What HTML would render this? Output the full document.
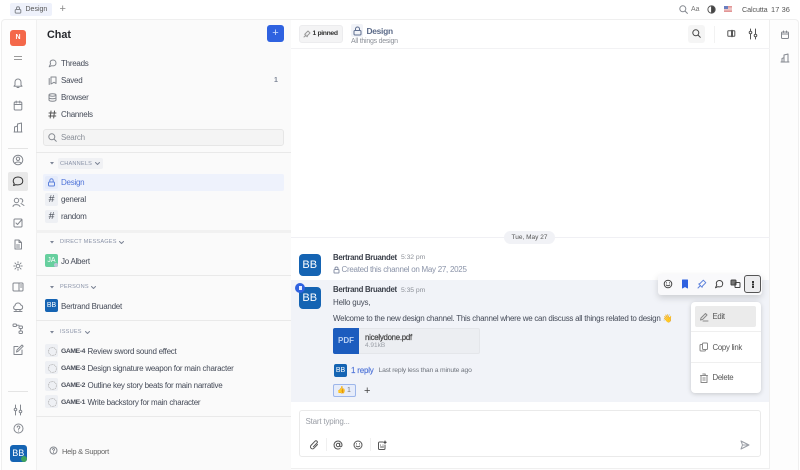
<!DOCTYPE html>
<html><head><meta charset="utf-8"><style>
html,body{margin:0;padding:0}
body{width:800px;height:470px;overflow:hidden;background:#fff;position:relative;font-family:"Liberation Sans",sans-serif;color:#454b58}
.a{position:absolute}
.t{position:absolute;white-space:nowrap;line-height:12px;font-size:8px;letter-spacing:-.26px}
svg{position:absolute;fill:none;stroke:#84888f;stroke-width:1;stroke-linecap:round;stroke-linejoin:round}
.hash{position:absolute;left:45px;width:13px;height:13px;background:#eef0f4;border-radius:2px;text-align:center;line-height:13px;font-size:10.5px;color:#4a4f5a}
.sec{position:absolute;left:60px;font-size:5.6px;letter-spacing:.2px;color:#8a93a8;line-height:10px;white-space:nowrap}
.line{position:absolute;left:36px;width:255px;background:#efefef}
.bb{position:absolute;background:#1564b3;color:#fff;text-align:center}
.g{font-size:6.8px;font-weight:700;letter-spacing:-.4px;color:#4a4f5a;left:61px}
.d{left:87.5px}
.nm{left:333px;font-weight:700;font-size:7.8px;letter-spacing:-.3px;color:#3a3f49}
.tm{left:401px;font-size:6.8px;color:#8d9199;letter-spacing:-.05px}
.m{left:712.5px;font-size:7.8px;color:#555;letter-spacing:-.28px}
.ic{position:absolute;left:45px;width:13px;height:13px;background:#eef0f4;border-radius:2px}
.ci{position:absolute;left:48px;width:7px;height:7px;border:1px dotted #aaa;border-radius:50%;box-sizing:content-box}
</style></head><body>
<!-- top bar -->
<div class="a" style="left:10px;top:3px;width:42px;height:13px;background:#eef1fb;border-radius:2px"></div>
<svg style="left:14px;top:6px" width="8" height="8" viewBox="0 0 8 8"><rect x="1.2" y="3.5" width="5.6" height="3.6" rx="1"/><path d="M2.5 3.5V2.200a1.500 1.500 0 0 1 3 0v1.300"/></svg>
<div class="t" style="left:25.500px;top:4px;font-size:7px;color:#555;letter-spacing:0">Design</div>
<div class="t" style="left:59.500px;top:3px;font-size:11px;color:#888;letter-spacing:0">+</div>
<svg style="left:679px;top:5px" width="9" height="9" viewBox="0 0 9 9"><circle cx="3.800" cy="3.800" r="3"/><path d="M6 6l2.400 2.400"/></svg>
<div class="t" style="left:691px;top:4px;font-size:7px;color:#777;letter-spacing:0">Aa</div>
<svg style="left:707px;top:5px;stroke:#555" width="9" height="9" viewBox="0 0 9 9"><circle cx="4.500" cy="4.500" r="3.600"/><path d="M4.500 .9a3.600 3.600 0 0 1 0 7.200z" fill="#444"/></svg>
<div class="a" style="left:724px;top:6px;width:8px;height:6px;background:linear-gradient(#e08a8a,#f0d0d0 50%,#e08a8a)"></div>
<div class="a" style="left:724px;top:6px;width:4px;height:3px;background:#6a7fc0"></div>
<div class="t" style="left:742px;top:4px;font-size:7.200px;color:#555;letter-spacing:-.1px">Calcutta</div>
<div class="t" style="left:771px;top:4px;font-size:7.400px;color:#555;letter-spacing:.1px">17 36</div>

<!-- frame -->
<div class="a" style="left:1px;top:19px;width:798px;height:451px;background:#fdfdfd;border:1px solid #efefef;border-bottom:0;box-sizing:border-box;border-radius:4px 4px 0 0"></div>
<div class="a" style="left:36px;top:20px;width:255px;height:450px;background:#fafafa;border-left:1px solid #f0f0f0;box-sizing:border-box"></div>
<div class="a" style="left:291px;top:20px;width:479px;height:449px;background:#fff;border-right:1px solid #efefef;border-bottom:1px solid #efefef;box-sizing:border-box"></div>

<!-- left rail -->
<div class="a" style="left:10px;top:30px;width:16px;height:16px;background:#f4684a;border-radius:3px;color:#fff;font-size:7px;text-align:center;line-height:16px;font-weight:700">N</div>
<div class="a" style="left:14px;top:56px;width:8px;height:1px;background:#9a9a9a"></div>
<div class="a" style="left:14px;top:59px;width:8px;height:1px;background:#9a9a9a"></div>
<svg style="left:13px;top:78px" width="10" height="11" viewBox="0 0 10 11"><path d="M5 1a3 3 0 0 0-3 3v3L1 8.200h8L8 7V4a3 3 0 0 0-3-3zM4 9.500h2"/></svg>
<svg style="left:13px;top:100px" width="10" height="11" viewBox="0 0 10 11"><rect x="1.200" y="2" width="7.600" height="8" rx="1"/><path d="M1.200 4.500h7.600M3.200 1v2M6.800 1v2"/></svg>
<svg style="left:13px;top:122px" width="10" height="11" viewBox="0 0 10 11"><path d="M1.500 10V5l3-1M4.500 10V2l4-1v9zM1 10h8"/></svg>
<div class="a" style="left:8px;top:148px;width:20px;height:1px;background:#e4e4e4"></div>
<svg style="left:12px;top:154px" width="12" height="12" viewBox="0 0 12 12"><circle cx="6" cy="6" r="4.800"/><circle cx="6" cy="4.800" r="1.700"/><path d="M2.800 9.500c1-2 5.400-2 6.400 0"/></svg>
<div class="a" style="left:8px;top:172px;width:20px;height:19px;background:#e9e9e9;border-radius:2px"></div>
<svg style="left:12px;top:176px;stroke:#333" width="12" height="11" viewBox="0 0 12 11"><path d="M6 1C3 1 1.200 2.700 1.200 5c0 1 .4 1.800 1 2.400L1.600 9.500l2.300-.9c.6.200 1.300.3 2.100.3 3 0 4.800-1.700 4.800-3.900S9 1 6 1z"/></svg>
<svg style="left:12px;top:197px" width="13" height="11" viewBox="0 0 13 11"><circle cx="4.500" cy="3.500" r="2.200"/><path d="M1 9.500c.4-2.500 5.600-2.500 7 0M8 1.800a2 2 0 0 1 2 3.400M9 6.500l3 2"/></svg>
<svg style="left:13px;top:218px" width="10" height="10" viewBox="0 0 10 10"><rect x="1" y="1" width="8" height="8" rx="1"/><path d="M3 5l1.500 1.500L8.500 2"/></svg>
<svg style="left:13px;top:239px" width="10" height="11" viewBox="0 0 10 11"><path d="M2 1h4l2.500 2.500V10H2zM6 1v2.500h2.500M3.500 6h3M3.500 8h3"/></svg>
<svg style="left:13px;top:261px" width="10" height="10" viewBox="0 0 10 10"><circle cx="5" cy="5" r="1.800"/><path d="M5 .8v1M5 8.200v1M.8 5h1M8.200 5h1M2 2l.7.7M7.300 7.300l.7.700M2 8l.7-.7M7.300 2.700L8 2"/></svg>
<svg style="left:12px;top:282px" width="12" height="10" viewBox="0 0 12 10"><rect x="1" y="1" width="10" height="8" rx="1"/><path d="M7 1v8M8.500 3h1.200M8.500 5h1.200"/></svg>
<svg style="left:12px;top:302px" width="12" height="12" viewBox="0 0 12 12"><path d="M3 7.500a2 2 0 0 1 0-3.800A3 3 0 0 1 8.800 3a2.300 2.300 0 0 1 0 4.500zM2 9.500h8M4 7.500v2M8 7.500v2"/></svg>
<svg style="left:12px;top:323px" width="12" height="12" viewBox="0 0 12 12"><rect x="1" y="1" width="3.500" height="2.500" rx="1"/><rect x="7" y="3" width="3.500" height="2.500" rx="1"/><rect x="7" y="8" width="3.500" height="2.500" rx="1"/><path d="M4.500 2.200H7M8.700 5.500V8"/></svg>
<svg style="left:12px;top:344px" width="12" height="12" viewBox="0 0 12 12"><path d="M6 2.500H2v8h8V6M4.500 8l.5-2L10 1l1.200 1.200-5 5z"/></svg>
<div class="a" style="left:8px;top:391px;width:20px;height:1px;background:#e4e4e4"></div>
<svg style="left:13px;top:404px" width="10" height="12" viewBox="0 0 10 12"><path d="M2.500 1v3M2.500 7v4M7.500 1v5M7.500 9v2"/><circle cx="2.500" cy="5.500" r="1.300"/><circle cx="7.500" cy="7.500" r="1.300"/></svg>
<svg style="left:13px;top:423px" width="11" height="11" viewBox="0 0 11 11"><circle cx="5.500" cy="5.500" r="4.500"/><path d="M4.200 4.200a1.300 1.300 0 1 1 1.900 1.200c-.4.200-.6.500-.6 1M5.500 8v.1"/></svg>
<div class="bb" style="left:10px;top:445px;width:16.500px;height:16.500px;border-radius:3px;font-size:9px;line-height:17px">BB</div>
<div class="a" style="left:21px;top:456px;width:6px;height:6px;background:#3fa35c;border-radius:50%"></div>

<!-- sidebar -->
<div class="t" style="left:47px;top:28px;font-size:10.800px;line-height:14px;font-weight:700;color:#26282d;letter-spacing:0">Chat</div>
<div class="a" style="left:267px;top:25px;width:17px;height:17px;background:#2f62e0;border-radius:3px;color:#cfe0ff;text-align:center;font-size:11px;line-height:16px">+</div>
<svg style="left:48px;top:59px" width="9" height="9" viewBox="0 0 9 9"><path d="M5 1C3.300 1 2.200 2 2.200 3.400c0 .5.100.9.400 1.300L1.200 7.800l2.500-1.100c.4.100.8.200 1.300.2C6.700 6.900 8 5.800 8 4S6.700 1 5 1z"/></svg>
<div class="t" style="left:61px;top:58px">Threads</div>
<svg style="left:48px;top:76px" width="9" height="9" viewBox="0 0 9 9"><path d="M3 1h5v6.500L6 6.300 3 8zM1.200 2.500v6"/></svg>
<div class="t" style="left:61px;top:75px">Saved</div>
<div class="t" style="left:274px;top:75px;font-size:7px;color:#7d8596;font-weight:700">1</div>
<svg style="left:48px;top:93px" width="9" height="9" viewBox="0 0 9 9"><ellipse cx="4.500" cy="2" rx="3.500" ry="1.200"/><path d="M1 2v5c0 .7 1.500 1.200 3.500 1.200S8 7.700 8 7V2M1 4.500c0 .7 1.500 1.200 3.500 1.200S8 5.200 8 4.500"/></svg>
<div class="t" style="left:61px;top:92px">Browser</div>
<svg style="left:48px;top:110px;stroke:#555" width="9" height="9" viewBox="0 0 9 9"><path d="M3 1L2.200 8M6.500 1l-.8 7M1 3h7M.8 6h7"/></svg>
<div class="t" style="left:61px;top:109px">Channels</div>
<div class="a" style="left:43px;top:129px;width:241px;height:17px;background:#f4f4f4;border:1px solid #e6e6e6;box-sizing:border-box;border-radius:3px"></div>
<svg style="left:47.500px;top:133px" width="9" height="9" viewBox="0 0 9 9"><circle cx="3.800" cy="3.800" r="3"/><path d="M6 6l2.300 2.300"/></svg>
<div class="t" style="left:61px;top:132px;color:#8a8f98">Search</div>
<div class="line" style="top:152px;height:1px;background:#e9e9e9"></div>

<svg style="left:49.500px;top:161px;fill:#7d8596;stroke:none" width="4" height="4" viewBox="0 0 4 4"><path d="M0 1h4L2 3.500z"/></svg>
<div class="a" style="left:58px;top:158px;width:45px;height:11px;background:#f0f1f4;border-radius:2px"></div>
<div class="sec" style="top:158.500px">CHANNELS</div>
<svg style="left:95px;top:162px;stroke:#7d8596" width="5" height="3" viewBox="0 0 5 3"><path d="M.5 .5l2 2 2-2"/></svg>

<div class="a" style="left:43px;top:174px;width:241px;height:17px;background:#eef2fc;border-radius:2px"></div>
<div class="a" style="left:45px;top:176px;width:13px;height:13px;background:#e5ebfa;border-radius:2px"></div>
<svg style="left:47px;top:178px;stroke:#5d82dc" width="9" height="9" viewBox="0 0 9 9"><rect x="1.500" y="4" width="6" height="4" rx="1"/><path d="M2.800 4V2.500a1.700 1.700 0 0 1 3.400 0V4"/></svg>
<div class="t" style="left:61px;top:177px;color:#4f74d8">Design</div>
<div class="hash" style="top:193px">#</div>
<div class="t" style="left:61px;top:194px">general</div>
<div class="hash" style="top:210px">#</div>
<div class="t" style="left:61px;top:211px">random</div>
<div class="line" style="top:230px;height:3px;background:#f1f1f1"></div>

<svg style="left:49.500px;top:239.500px;fill:#7d8596;stroke:none" width="4" height="4" viewBox="0 0 4 4"><path d="M0 1h4L2 3.500z"/></svg>
<div class="sec" style="top:236.500px">DIRECT MESSAGES</div>
<svg style="left:119px;top:240.500px;stroke:#7d8596" width="5" height="3" viewBox="0 0 5 3"><path d="M.5 .5l2 2 2-2"/></svg>
<div class="a" style="left:45px;top:254px;width:13px;height:13px;background:#66cf9e;border-radius:2px;color:#fff;font-size:7px;text-align:center;line-height:13px">JA</div>
<div class="a" style="left:54px;top:263px;width:4px;height:4px;background:#bcc6d8;border-radius:50%"></div>
<div class="t" style="left:61px;top:256px">Jo Albert</div>
<div class="line" style="top:275px;height:1px;background:#e9e9e9"></div>

<svg style="left:49.500px;top:284.500px;fill:#7d8596;stroke:none" width="4" height="4" viewBox="0 0 4 4"><path d="M0 1h4L2 3.500z"/></svg>
<div class="sec" style="top:281.500px">PERSONS</div>
<svg style="left:91px;top:285.500px;stroke:#7d8596" width="5" height="3" viewBox="0 0 5 3"><path d="M.5 .5l2 2 2-2"/></svg>
<div class="bb" style="left:45px;top:299px;width:13px;height:13px;border-radius:2px;font-size:7px;line-height:13px">BB</div>
<div class="t" style="left:61px;top:301px">Bertrand Bruandet</div>
<div class="line" style="top:320px;height:1px;background:#e9e9e9"></div>

<svg style="left:49.500px;top:329.500px;fill:#7d8596;stroke:none" width="4" height="4" viewBox="0 0 4 4"><path d="M0 1h4L2 3.500z"/></svg>
<div class="sec" style="top:326.500px">ISSUES</div>
<svg style="left:84.500px;top:330.500px;stroke:#7d8596" width="5" height="3" viewBox="0 0 5 3"><path d="M.5 .5l2 2 2-2"/></svg>

<div class="ic" style="top:344px"></div><div class="ci" style="top:347px"></div>
<div class="ic" style="top:361px"></div><div class="ci" style="top:364px"></div>
<div class="ic" style="top:378px"></div><div class="ci" style="top:381px"></div>
<div class="ic" style="top:395px"></div><div class="ci" style="top:398px"></div>
<div class="t g" style="top:346px">GAME-4</div><div class="t d" style="top:346px">Review sword sound effect</div>
<div class="t g" style="top:363px">GAME-3</div><div class="t d" style="top:363px">Design signature weapon for main character</div>
<div class="t g" style="top:380px">GAME-2</div><div class="t d" style="top:380px">Outline key story beats for main narrative</div>
<div class="t g" style="top:397px">GAME-1</div><div class="t d" style="top:397px">Write backstory for main character</div>
<div class="line" style="top:416px;height:1px;background:#e9e9e9"></div>
<svg style="left:49px;top:446px" width="9" height="9" viewBox="0 0 9 9"><circle cx="4.500" cy="4.500" r="3.500"/><path d="M3.500 3.500a1 1 0 1 1 1.500.9c-.3.200-.5.400-.5.800M4.500 6.500v.1"/></svg>
<div class="t" style="left:62px;top:446px;font-size:7.500px;color:#666;letter-spacing:-.28px">Help &amp; Support</div>

<!-- channel header -->
<div class="a" style="left:291px;top:48px;width:479px;height:1px;background:#f2f2f4"></div>
<div class="a" style="left:299px;top:25px;width:44px;height:18px;background:#f4f4f5;border:1px solid #ececee;box-sizing:border-box;border-radius:3px"></div>
<svg style="left:303px;top:30px;stroke:#999" width="8" height="8" viewBox="0 0 8 8"><path d="M1 7l2-2M2.500 3.500L5 1l2 2-2.500 2.500-.3 1.300-2.500-2.500z"/></svg>
<div class="t" style="left:312.500px;top:28px;font-size:6.800px;font-weight:700;color:#333;letter-spacing:-.35px">1 pinned</div>
<div class="a" style="left:351px;top:24px;width:12px;height:13px;background:#f1f3f8;border-radius:2px"></div>
<svg style="left:352.500px;top:26px;stroke:#5f6f90" width="9" height="10" viewBox="0 0 9 10"><rect x="1" y="4.500" width="7" height="4.500" rx="1"/><path d="M2.500 4.500V3a2 2 0 0 1 4 0v1.500"/></svg>
<div class="t" style="left:366.500px;top:25px;font-size:8.400px;font-weight:700;color:#5b6a88;letter-spacing:-.27px">Design</div>
<div class="t" style="left:351px;top:36px;font-size:7px;color:#8d9199;letter-spacing:-.25px">All things design</div>
<div class="a" style="left:688px;top:25px;width:17px;height:18px;background:#f5f5f5;border-radius:3px"></div>
<svg style="left:692px;top:29px;stroke:#444" width="9" height="9" viewBox="0 0 9 9"><circle cx="3.800" cy="3.800" r="3"/><path d="M6 6l2.300 2.300"/></svg>
<div class="a" style="left:714px;top:26px;width:1px;height:17px;background:#f2f2f2"></div>
<svg style="left:727px;top:29px;stroke:#555" width="9" height="9" viewBox="0 0 9 9"><rect x=".8" y="1.800" width="7" height="5.400" rx=".6"/><path d="M5 1.800v5.400" stroke-width="2"/></svg>
<svg style="left:748px;top:28px;stroke:#555" width="10" height="12" viewBox="0 0 10 12"><path d="M2.500 1v2M2.500 6v5M7.500 1v5M7.500 9v2"/><circle cx="2.500" cy="4.500" r="1.300"/><circle cx="7.500" cy="7.500" r="1.300"/></svg>

<!-- right rail -->
<svg style="left:780px;top:30px" width="10" height="10" viewBox="0 0 10 10"><rect x="1.500" y="2" width="7" height="6.500" rx="1"/><path d="M1.500 4h7M3.500 1v1.500M6.500 1v1.500"/></svg>
<svg style="left:780px;top:53px" width="10" height="10" viewBox="0 0 10 10"><path d="M2 9V5.500l2-.8M4 9V2l4-1v8zM1 9h8"/></svg>

<!-- messages -->
<div class="a" style="left:291px;top:237px;width:479px;height:1px;background:#f0f0f4"></div>
<div class="a" style="left:504px;top:231px;width:51px;height:13px;background:#f1f2f6;border-radius:7px;text-align:center;line-height:13px;font-size:6.500px;color:#555">Tue, May 27</div>

<div class="bb" style="left:299px;top:254px;width:21.500px;height:21.500px;border-radius:4px;font-size:11px;line-height:22px">BB</div>
<div class="t nm" style="top:251.500px">Bertrand Bruandet</div>
<div class="t tm" style="top:252px">5:32 pm</div>
<svg style="left:333px;top:266px;stroke:#8a93a8" width="7" height="8" viewBox="0 0 7 8"><rect x="1" y="3.500" width="5" height="3.500" rx=".8"/><path d="M2 3.500V2.500a1.500 1.500 0 0 1 3 0v1"/></svg>
<div class="t" style="left:341.500px;top:264px;color:#8a93a8;letter-spacing:-.28px">Created this channel on May 27, 2025</div>

<div class="a" style="left:291px;top:280px;width:478px;height:122px;background:#f1f3f8"></div>
<div class="bb" style="left:299px;top:287px;width:21.500px;height:21.500px;border-radius:4px;font-size:11px;line-height:22px">BB</div>
<div class="a" style="left:295px;top:283px;width:10px;height:10px;background:#2f62e0;border-radius:50%"></div>
<div class="a" style="left:298.500px;top:286px;width:3px;height:4px;background:#e8eeff"></div>
<div class="t nm" style="top:284px">Bertrand Bruandet</div>
<div class="t tm" style="top:285px">5:35 pm</div>
<div class="t" style="left:333px;top:297px;letter-spacing:-.2px">Hello guys,</div>
<div class="t" style="left:333px;top:312.500px;letter-spacing:-.27px">Welcome to the new design channel. This channel where we can discuss all things related to design 👋</div>
<div class="a" style="left:333px;top:328px;width:147px;height:26px;background:#eceef2;border:1px solid #e4e6ea;box-sizing:border-box;border-radius:2px"></div>
<div class="a" style="left:333px;top:328px;width:26px;height:26px;background:#1c5cbe;border-radius:2px 0 0 2px;color:#b9d0f2;text-align:center;line-height:26px;font-size:8px;font-weight:700">PDF</div>
<div class="t" style="left:365px;top:331.500px;font-size:7.800px;color:#444;letter-spacing:-.24px;-webkit-text-stroke:.2px #444">nicelydone.pdf</div>
<div class="t" style="left:365px;top:339.500px;font-size:6.500px;color:#9a9ea6;letter-spacing:0">4.91kB</div>
<div class="bb" style="left:334px;top:364px;width:13px;height:13px;border-radius:2px;font-size:7px;line-height:13px">BB</div>
<div class="t" style="left:351px;top:365px;color:#4f74d8;letter-spacing:-.2px;-webkit-text-stroke:.15px #4f74d8">1 reply</div>
<div class="t" style="left:378.500px;top:365px;font-size:6.800px;color:#70757e;letter-spacing:-.2px">Last reply less than a minute ago</div>
<div class="a" style="left:333px;top:384px;width:23px;height:13px;background:#e6ecfa;border:1px solid #9db6ea;box-sizing:border-box;border-radius:2px"></div>
<div class="t" style="left:337px;top:385px;font-size:7px;letter-spacing:0">👍</div>
<div class="t" style="left:347px;top:385px;font-size:7px;color:#777;letter-spacing:0">1</div>
<div class="t" style="left:364px;top:385px;font-size:11px;color:#444;letter-spacing:0">+</div>

<!-- action bar -->
<div class="a" style="left:658px;top:274px;width:104px;height:21px;background:#f9f9fb;border-radius:3px;box-shadow:0 3px 7px rgba(0,0,0,.15)"></div>
<svg style="left:663px;top:279px;stroke:#444" width="10" height="10" viewBox="0 0 10 10"><circle cx="5" cy="5" r="3.800"/><path d="M3.200 6c1 1 2.600 1 3.600 0M3.500 3.800v.2M6.500 3.800v.2"/></svg>
<svg style="left:680px;top:279px;stroke:#2f62e0" width="10" height="10" viewBox="0 0 10 10"><path d="M2.500 1h5v8L5 7.500 2.500 9z" fill="#2f62e0"/></svg>
<svg style="left:697px;top:279px;stroke:#5d82dc" width="10" height="10" viewBox="0 0 10 10"><path d="M1 9l2.500-2.500M3 4.500L6.300 1.200 8.800 3.700 5.500 7l-.4 1.300-3.300-3.300z"/></svg>
<svg style="left:714px;top:279px;stroke:#444" width="10" height="10" viewBox="0 0 10 10"><path d="M5.500 1.500C3.500 1.500 2.300 2.800 2.300 4.300c0 .6.200 1.100.5 1.500L1.500 8.800l2.500-1.200c.5.200 1 .3 1.500.3 2 0 3.200-1.400 3.200-3.200s-1.200-3.200-3.200-3.200z"/></svg>
<svg style="left:730px;top:279px;stroke:#444" width="11" height="10" viewBox="0 0 11 10"><rect x="1" y="1" width="5" height="5" rx=".8" fill="#777"/><rect x="5" y="3.500" width="5" height="5" rx=".8"/></svg>
<div class="a" style="left:744px;top:275px;width:17px;height:18px;background:#ececee;border:1px solid #555;box-sizing:border-box;border-radius:3px"></div>
<div class="a" style="left:752px;top:281px;width:1.500px;height:1.500px;background:#333;box-shadow:0 2.500px 0 #333,0 5px 0 #333"></div>

<!-- menu -->
<div class="a" style="left:691px;top:302px;width:70px;height:91px;background:#fff;border-radius:4px;box-shadow:0 1px 5px rgba(0,0,0,.18)"></div>
<div class="a" style="left:695px;top:306px;width:61px;height:21px;background:#ebebeb;border-radius:2px"></div>
<div class="a" style="left:691px;top:331px;width:70px;height:1px;background:#efefef"></div>
<div class="a" style="left:691px;top:362px;width:70px;height:1px;background:#efefef"></div>
<svg style="left:699px;top:312px;stroke:#888" width="10" height="10" viewBox="0 0 10 10"><path d="M1.500 8l.5-2 4.500-4.500 1.500 1.500L3.500 7.500zM4 9h5"/></svg>
<div class="t m" style="top:311px">Edit</div>
<svg style="left:699px;top:342px;stroke:#888" width="10" height="10" viewBox="0 0 10 10"><rect x="3.500" y="1" width="5" height="6.500" rx="1"/><path d="M3.500 2.500H2a1 1 0 0 0-1 1V8a1 1 0 0 0 1 1h3.500a1 1 0 0 0 1-1v-.5"/></svg>
<div class="t m" style="top:341.500px">Copy link</div>
<svg style="left:699px;top:373px;stroke:#888" width="10" height="10" viewBox="0 0 10 10"><path d="M2 2.500h6v7H2zM1.500 2.500h7M3.800 1h2.400v1.500M3.800 5h2.400M3.800 7h2.400"/></svg>
<div class="t m" style="top:372px">Delete</div>

<!-- composer -->
<div class="a" style="left:299px;top:410px;width:462px;height:47px;background:#fff;border:1px solid #eaeaea;box-sizing:border-box;border-radius:3px"></div>
<div class="t" style="left:305.500px;top:415.500px;color:#9a9ea6;letter-spacing:-.2px">Start typing...</div>
<svg style="left:309px;top:440px;stroke:#555" width="10" height="10" viewBox="0 0 10 10"><path d="M8.500 4.500L5 8.200a2 2 0 0 1-3-2.800l4-4.200a1.300 1.300 0 0 1 2 1.800L4.300 6.800"/></svg>
<div class="a" style="left:326px;top:438px;width:1px;height:13px;background:#f0f0f0"></div>
<svg style="left:333px;top:440px;stroke:#555" width="10" height="10" viewBox="0 0 10 10"><circle cx="5" cy="5" r="1.700"/><path d="M6.700 3.300v2.500c0 1.500 2.300 1.200 2.300-.8A4 4 0 1 0 7 8.500"/></svg>
<svg style="left:353px;top:440px;stroke:#555" width="10" height="10" viewBox="0 0 10 10"><circle cx="5" cy="5" r="4"/><path d="M3.200 6c1 1 2.600 1 3.600 0M3.500 3.800v.2M6.500 3.800v.2"/></svg>
<div class="a" style="left:370px;top:438px;width:1px;height:13px;background:#f0f0f0"></div>
<svg style="left:377px;top:440px;stroke:#555" width="10" height="10" viewBox="0 0 10 10"><path d="M6 2H2.500a1 1 0 0 0-1 1v5.500a1 1 0 0 0 1 1H7a1 1 0 0 0 1-1V5M3.500 5v.1M6 5v.1M3.500 7h3"/><path d="M8 1v2.500M6.800 2.200h2.400" stroke="#333"/></svg>
<svg style="left:740px;top:440px;stroke:#9a9ea6" width="10" height="10" viewBox="0 0 10 10"><path d="M1 1l8 4-8 4 1.500-4zM2.500 5H9"/></svg>
</body></html>
